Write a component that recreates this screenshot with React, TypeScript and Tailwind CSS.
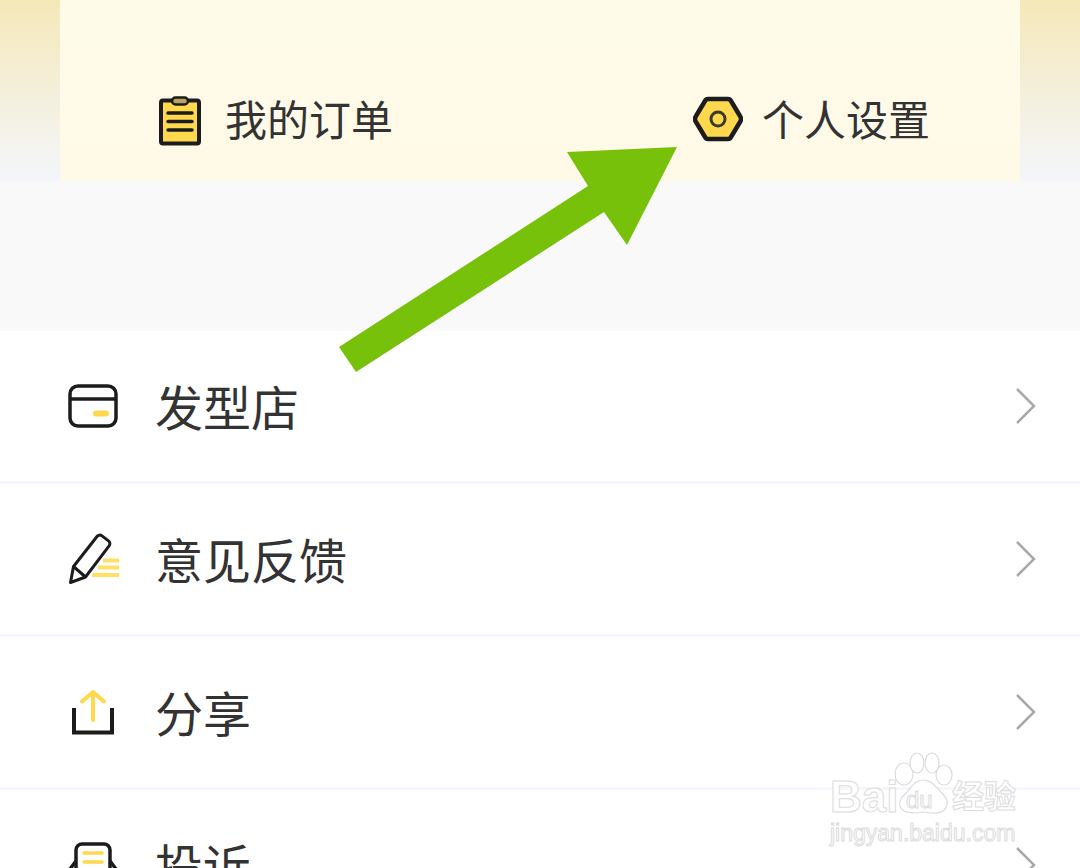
const rows = [
  { label: "发型店", icon: <CardIcon /> },
  { label: "意见反馈", icon: <PenIcon /> },
  { label: "分享", icon: <ShareIcon /> },
  { label: "投诉", icon: <MailIcon /> },
];

function ClipboardIcon() {
  return (
    <svg width="42" height="50" viewBox="0 0 42 50" fill="none">
      <rect x="2" y="4.5" width="38" height="43" rx="2" fill="#ffd84d" stroke="#1c1c1c" strokeWidth="4" />
      <rect x="13" y="1.5" width="16" height="7" rx="3.5" fill="#b8a660" stroke="#1c1c1c" strokeWidth="2.5" />
      <path d="M9 17h24M9 25.5h24M9 34h24" stroke="#1c1c1c" strokeWidth="3.5" strokeLinecap="round" />
    </svg>
  );
}

function HexIcon() {
  return (
    <svg width="50" height="46" viewBox="0 0 50 46" fill="none">
      <path d="M15 3h20q2 0 3 2l9 15q2 3 0 6l-9 15q-1 2-3 2H15q-2 0-3-2L3 26q-2-3 0-6l9-15q1-2 3-2z" fill="#ffd84d" stroke="#1c1c1c" strokeWidth="4.500" strokeLinejoin="round" />
      <circle cx="25" cy="23" r="7" stroke="#3a3a2a" strokeWidth="3" fill="#ffd84d" />
    </svg>
  );
}

function CardIcon() {
  return (
    <svg width="50" height="44" viewBox="0 0 50 44" fill="none">
      <rect x="2" y="2" width="46" height="40" rx="8" stroke="#1c1c1c" strokeWidth="3.500" />
      <path d="M2 15h46" stroke="#1c1c1c" strokeWidth="3.500" />
      <path d="M28 29.500h10" stroke="#ffd84d" strokeWidth="6" strokeLinecap="round" />
    </svg>
  );
}

function PenIcon() {
  return (
    <svg width="52" height="52" viewBox="0 0 52 52" fill="none">
      <path d="M2.500 49.500l3-16L29 3.500a3.500 3.500 0 0 1 5-.6l6.500 5a3.500 3.500 0 0 1 .6 5L17.500 44z" stroke="#1c1c1c" strokeWidth="3" strokeLinejoin="round" />
      <path d="M5.500 33.500l12 10.500" stroke="#1c1c1c" strokeWidth="3" />
      <path d="M35 27.500h16M30 34.500h21M24 42h27" stroke="#ffdf66" strokeWidth="4" />
    </svg>
  );
}

function ShareIcon() {
  return (
    <svg className="ml-[4px]" width="42" height="46" viewBox="0 0 42 46" fill="none">
      <path d="M2 19v24.500h38V19" stroke="#1c1c1c" strokeWidth="4" />
      <path d="M21 31V3M10 12.500L21 3l11 9.500" stroke="#ffd84d" strokeWidth="4" strokeLinecap="round" strokeLinejoin="round" />
    </svg>
  );
}

function MailIcon() {
  return (
    <svg width="50" height="46" viewBox="0 0 50 46" fill="none">
      <path d="M8 26V8a6 6 0 0 1 6-6h22a6 6 0 0 1 6 6v18" stroke="#1c1c1c" strokeWidth="3.500" />
      <path d="M8 19L2 27v15h46V27l-6-8M2 27l23 12 23-12" stroke="#1c1c1c" strokeWidth="3.500" strokeLinejoin="round" />
      <path d="M16 11h18M16 20h18" stroke="#ffd84d" strokeWidth="3.500" strokeLinecap="round" />
    </svg>
  );
}

function Chevron() {
  return (
    <svg width="22" height="38" viewBox="0 0 22 38" fill="none">
      <path d="M2 2l17 17L2 36" stroke="#a9a9a9" strokeWidth="2.500" />
    </svg>
  );
}

function Watermark() {
  return (
    <div className="absolute left-[828px] top-[752px] w-[200px] h-[92px] text-white [-webkit-text-stroke:1px_#dcdcdc] font-['Liberation_Sans','Noto_Sans_CJK_SC',sans-serif]">
      <div className="absolute left-[2px] top-[20px] text-[44px] leading-[50px] font-bold">Bai</div>
      <svg className="absolute left-[62px] top-0" width="66" height="66" viewBox="0 0 66 66" fill="none" stroke="#dcdcdc" strokeWidth="1.200">
        <ellipse cx="14" cy="22" rx="9" ry="11" fill="#fff" />
        <ellipse cx="27" cy="11" rx="7" ry="10" fill="#fff" />
        <ellipse cx="42" cy="11" rx="7" ry="10" fill="#fff" />
        <ellipse cx="54" cy="23" rx="8" ry="10" fill="#fff" />
        <path d="M33 28c8 0 12 6 17 11 6 6 9 10 6 16-3 7-11 7-23 5-12 2-21 1-23-6-2-6 3-10 8-15 5-6 8-11 15-11z" fill="#fff" />
      </svg>
      <div className="absolute left-[78px] top-[34px] text-[24px] leading-[28px]">du</div>
      <div className="absolute left-[124px] top-[26px] text-[32px] leading-[38px] font-bold">经验</div>
      <div className="absolute left-[2px] top-[68px] text-[23px] leading-[26px] whitespace-nowrap">jingyan.baidu.com</div>
    </div>
  );
}

export default function App() {
  return (
    <div className="relative w-[1080px] h-[868px] overflow-hidden bg-white text-[#333333] font-['Noto_Sans_CJK_SC','Liberation_Sans',sans-serif]">
      <div className="h-[181px] px-[60px] bg-gradient-to-b from-[#f5e8b8] to-[#f4f6fb]">
        <div className="h-full flex justify-between pt-[96px] pl-[99px] pr-[90px] bg-gradient-to-b from-[#fffbe9] to-[#fff9e8]">
          <div className="flex items-start h-[50px]">
            <ClipboardIcon />
            <span className="ml-[24px] -mt-[3px] text-[42px] leading-[50px]">我的订单</span>
          </div>
          <div className="flex items-start h-[50px]">
            <HexIcon />
            <span className="ml-[19px] -mt-[3px] text-[42px] leading-[50px]">个人设置</span>
          </div>
        </div>
      </div>
      <div className="h-[150px] bg-[#f9f9fa]" />
      <div>
        {rows.map((r) => (
          <div key={r.label} className="flex items-center h-[153px] pl-[68px] pr-[43px] border-b-[3px] border-[#f4f7fc]">
            <div className="w-[87px] flex">{r.icon}</div>
            <span className="flex-1 -mt-[3px] text-[48px] leading-[56px]">{r.label}</span>
            <Chevron />
          </div>
        ))}
      </div>
      <svg className="absolute left-0 top-0" width="1080" height="868" viewBox="0 0 1080 868">
        <polygon points="677,147 567,152 588,186 339,347 356,372 604,212 627,245" fill="#77c10a" />
      </svg>
      <Watermark />
    </div>
  );
}
